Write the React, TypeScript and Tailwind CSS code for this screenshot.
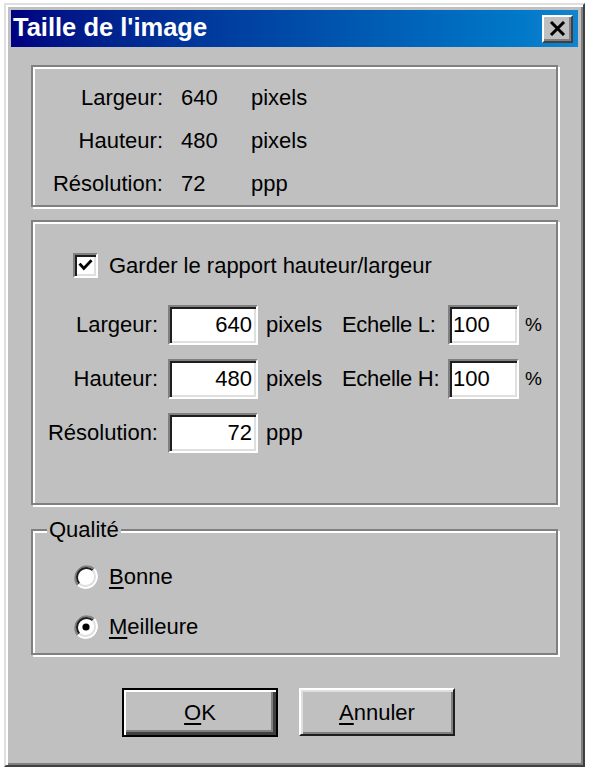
const sunken =
  "bg-white border-2 border-t-[#808080] border-l-[#808080] border-r-white border-b-white shadow-[inset_2px_2px_0_#1e1e1e,inset_-2px_-2px_0_#dfdfdf]";
const etched = "border-2 border-[#808080] shadow-[inset_2px_2px_0_#ffffff,2px_2px_0_#ffffff]";

const Checkbox = () => (
  <div className={`w-[25px] h-[25px] ${sunken} flex items-center justify-center`}>
    <svg width="25" height="25" viewBox="0 0 25 25">
      <polyline points="6.5,11.5 10.5,16 18.5,7.5" fill="none" stroke="#000" strokeWidth="3.4" strokeLinecap="square" />
    </svg>
  </div>
);

const Radio = ({ checked }: { checked?: boolean }) => (
  <svg width="26" height="26" viewBox="0 0 26 26">
    <circle cx="13" cy="13" r="11.5" fill="#fff" />
    <path d="M4.9 21.1 A11.5 11.5 0 0 1 21.1 4.9" fill="none" stroke="#808080" strokeWidth="2" />
    <path d="M21.1 4.9 A11.5 11.5 0 0 1 4.9 21.1" fill="none" stroke="#ffffff" strokeWidth="2" />
    <path d="M6.3 19.7 A9.5 9.5 0 0 1 19.7 6.3" fill="none" stroke="#1e1e1e" strokeWidth="2" />
    <path d="M19.7 6.3 A9.5 9.5 0 0 1 6.3 19.7" fill="none" stroke="#dfdfdf" strokeWidth="2" />
    {checked && <circle cx="13" cy="13" r="3.6" fill="#000" />}
  </svg>
);

const infoRows = [
  { label: "Largeur:", value: "640", unit: "pixels" },
  { label: "Hauteur:", value: "480", unit: "pixels" },
  { label: "Résolution:", value: "72", unit: "ppp" },
];

const sizeRows = [
  { label: "Largeur:", value: "640", unit: "pixels", scale: "Echelle L:" },
  { label: "Hauteur:", value: "480", unit: "pixels", scale: "Echelle H:" },
  { label: "Résolution:", value: "72", unit: "ppp", scale: null },
];

export default function App() {
  return (
    <div className="min-h-screen bg-white pl-[4px] pt-[3px] font-['Liberation_Sans',Arial,sans-serif] text-black">
      <div className="w-[581px] h-[764px] bg-[#c0c0c0] border-2 border-t-[#dfdfdf] border-l-[#dfdfdf] border-r-[#404040] border-b-[#404040] shadow-[inset_2px_2px_0_#ffffff,inset_-2px_-2px_0_#808080] p-[5px] flex flex-col">
        {/* Title bar */}
        <div className="h-[37px] shrink-0 flex items-center justify-between pl-[2px] pr-[5px] bg-linear-to-r from-[#000080] to-[#1084d0]">
          <span className="text-white font-bold text-[25.5px] leading-none pb-[2px]">Taille de l'image</span>
          <div className="w-[31px] h-[28px] bg-[#c0c0c0] border-2 border-t-white border-l-white border-r-[#404040] border-b-[#404040] shadow-[inset_-2px_-2px_0_#808080] flex items-center justify-center">
            <svg width="17" height="15" viewBox="0 0 17 15">
              <path d="M2 1 L15 14 M15 1 L2 14" stroke="#000" strokeWidth="3" />
            </svg>
          </div>
        </div>

        <div className="px-[20px] pt-[18px] text-[22px] leading-[24px] whitespace-nowrap">
          {/* Current size */}
          <div className={`h-[142px] ${etched} pt-[9px]`}>
            {infoRows.map((r) => (
              <div key={r.label} className="h-[43px] flex items-center">
                <span className="w-[130px] text-right">{r.label}</span>
                <span className="ml-[18px] w-[70px]">{r.value}</span>
                <span>{r.unit}</span>
              </div>
            ))}
          </div>

          {/* New size */}
          <div className={`mt-[13px] h-[285px] ${etched} pt-[31px]`}>
            <div className="flex items-center ml-[40px]">
              <Checkbox />
              <span className="ml-[11px]">Garder le rapport hauteur/largeur</span>
            </div>
            <div className="mt-[27px] flex flex-col gap-[14px]">
              {sizeRows.map((r) => (
                <div key={r.label} className="h-[40px] flex items-center">
                  <span className="w-[125px] shrink-0 text-right">{r.label}</span>
                  <div className={`ml-[10px] w-[90px] h-[40px] shrink-0 ${sunken} flex items-center justify-end pr-[4px]`}>
                    {r.value}
                  </div>
                  <span className="ml-[8px] w-[54px] shrink-0">{r.unit}</span>
                  {r.scale && (
                    <>
                      <span className="ml-[22px] w-[97px] shrink-0 tracking-[-0.3px]">{r.scale}</span>
                      <div className={`ml-[9px] w-[71px] h-[40px] shrink-0 ${sunken} flex items-center pl-[3px]`}>100</div>
                      <span className="ml-[6px] text-[19px]">%</span>
                    </>
                  )}
                </div>
              ))}
            </div>
          </div>

          {/* Quality */}
          <div className={`relative mt-[24px] h-[126px] ${etched} pt-[33px]`}>
            <span className="absolute left-[14px] -top-[13px] px-[2px] bg-[#c0c0c0]">Qualité</span>
            <div className="flex flex-col gap-[24px]">
              <div className="h-[26px] flex items-center ml-[40px]">
                <Radio />
                <span className="ml-[10px]">
                  <span className="underline underline-offset-[3px]">B</span>onne
                </span>
              </div>
              <div className="h-[26px] flex items-center ml-[40px]">
                <Radio checked />
                <span className="ml-[10px]">
                  <span className="underline underline-offset-[3px]">M</span>eilleure
                </span>
              </div>
            </div>
          </div>
        </div>

        {/* Buttons */}
        <div className="mt-[33px] flex gap-[21px] pl-[111px] text-[22px]">
          <button className="w-[156px] h-[49px] border-2 border-black bg-[#c0c0c0] shadow-[inset_2px_2px_0_#ffffff,inset_-3px_-3px_0_#404040,inset_-5px_-5px_0_#808080] flex items-center justify-center">
            <span>
              <span className="underline underline-offset-[3px]">O</span>K
            </span>
          </button>
          <button className="w-[156px] h-[48px] border-2 border-t-white border-l-white border-r-[#1e1e1e] border-b-[#1e1e1e] bg-[#c0c0c0] shadow-[inset_2px_2px_0_#dfdfdf,inset_-2px_-2px_0_#808080] flex items-center justify-center">
            <span>
              <span className="underline underline-offset-[3px]">A</span>nnuler
            </span>
          </button>
        </div>
      </div>
    </div>
  );
}
